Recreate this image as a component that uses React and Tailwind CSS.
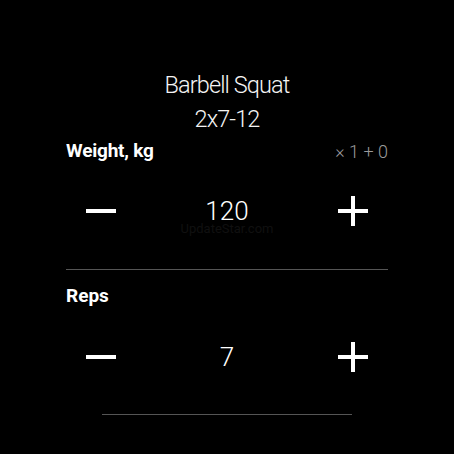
function Minus() {
  return <div className="w-[30px] h-[4px] bg-white" />;
}

function Plus() {
  return (
    <div className="relative w-[30px] h-[30px]">
      <div className="absolute left-0 top-[13px] w-[30px] h-[4px] bg-white" />
      <div className="absolute top-0 left-[13px] w-[4px] h-[30px] bg-white" />
    </div>
  );
}

function Stepper({ value }) {
  return (
    <div className="flex items-center justify-between px-[20px] h-[60px]">
      <Minus />
      <span className="text-[26px] font-light leading-none text-white">{value}</span>
      <Plus />
    </div>
  );
}

export default function App() {
  return (
    <div
      className="w-[454px] h-[454px] bg-black text-white overflow-hidden"
      style={{ fontFamily: "Roboto, 'Noto Sans', sans-serif" }}
    >
      <div className="pt-[68px] text-center font-light text-[23.5px] tracking-[-0.9px] leading-[34px] text-[#f4f4f4]">
        <div>Barbell Squat</div>
        <div>2x7-12</div>
      </div>
      <div className="mx-auto w-[322px]">
        <div className="flex items-center justify-between h-[30px]">
          <span className="text-[19px] font-bold tracking-[-0.2px]">Weight, kg</span>
          <span className="text-[18px] font-light text-[#9a9a9a]">× 1 + 0</span>
        </div>
        <div className="relative mt-[15px]">
          <Stepper value="120" />
          <div className="absolute left-0 right-0 top-[41px] text-center text-[13px] leading-[14px] text-[#101010]">
            UpdateStar.com
          </div>
        </div>
        <div className="mt-[28px] h-px bg-[#555]" />
        <div className="flex items-center h-[30px] mt-[11px]">
          <span className="text-[19px] font-bold">Reps</span>
        </div>
        <div className="mt-[16px]">
          <Stepper value="7" />
        </div>
        <div className="mt-[27px] mx-auto w-[250px] h-px bg-[#555]" />
      </div>
    </div>
  );
}
